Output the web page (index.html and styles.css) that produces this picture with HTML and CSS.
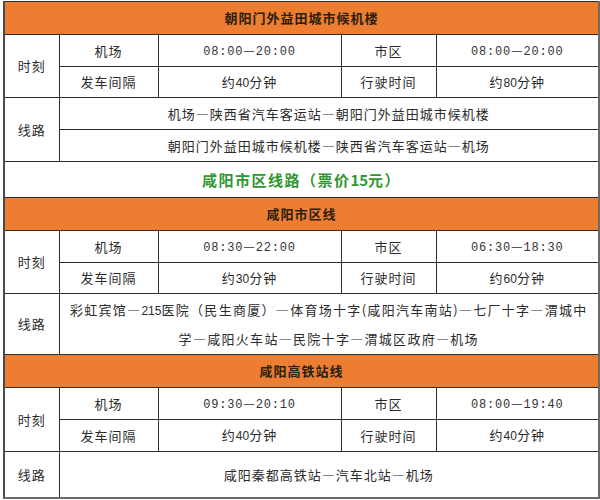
FILE: index.html
```html
<!DOCTYPE html>
<html lang="zh">
<head>
<meta charset="utf-8">
<title>机场巴士时刻表</title>
<link rel="stylesheet" href="styles.css">
</head>
<body>
<table class="sched">
  <colgroup>
    <col class="c1"><col class="c2"><col class="c3"><col class="c4"><col class="c5">
  </colgroup>
  <tbody>
    <tr class="head"><td colspan="5">朝阳门外益田城市候机楼</td></tr>
    <tr class="r32">
      <td rowspan="2">时刻</td>
      <td>机场</td>
      <td class="time">08:00<span class="dash">—</span>20:00</td>
      <td>市区</td>
      <td class="time">08:00<span class="dash">—</span>20:00</td>
    </tr>
    <tr class="r31">
      <td>发车间隔</td>
      <td>约<span class="num">40</span>分钟</td>
      <td>行驶时间</td>
      <td>约<span class="num">80</span>分钟</td>
    </tr>
    <tr class="r32">
      <td rowspan="2">线路</td>
      <td colspan="4">机场—陕西省汽车客运站—朝阳门外益田城市候机楼</td>
    </tr>
    <tr class="r32">
      <td colspan="4">朝阳门外益田城市候机楼—陕西省汽车客运站—机场</td>
    </tr>
    <tr class="title"><td colspan="5">咸阳市区线路（票价<span class="tnum">15</span>元）</td></tr>

    <tr class="head"><td colspan="5">咸阳市区线</td></tr>
    <tr class="r32">
      <td rowspan="2">时刻</td>
      <td>机场</td>
      <td class="time">08:30<span class="dash">—</span>22:00</td>
      <td>市区</td>
      <td class="time">06:30<span class="dash">—</span>18:30</td>
    </tr>
    <tr class="r31">
      <td>发车间隔</td>
      <td>约<span class="num">30</span>分钟</td>
      <td>行驶时间</td>
      <td>约<span class="num">60</span>分钟</td>
    </tr>
    <tr class="r61">
      <td>线路</td>
      <td colspan="4" class="long">彩虹宾馆—<span class="num">215</span>医院（民生商厦）—体育场十字(咸阳汽车南站)—七厂十字—渭城中<br>学—咸阳火车站—民院十字—渭城区政府—机场</td>
    </tr>

    <tr class="head"><td colspan="5">咸阳高铁站线</td></tr>
    <tr class="r32">
      <td rowspan="2">时刻</td>
      <td>机场</td>
      <td class="time">09:30<span class="dash">—</span>20:10</td>
      <td>市区</td>
      <td class="time">08:00<span class="dash">—</span>19:40</td>
    </tr>
    <tr class="r32">
      <td>发车间隔</td>
      <td>约<span class="num">40</span>分钟</td>
      <td>行驶时间</td>
      <td>约<span class="num">40</span>分钟</td>
    </tr>
    <tr class="r46">
      <td>线路</td>
      <td colspan="4">咸阳秦都高铁站—汽车北站—机场</td>
    </tr>
  </tbody>
</table>
</body>
</html>
```

FILE: styles.css
```css
html, body {
  margin: 0;
  padding: 0;
  background: #ffffff;
}

body {
  font-family: "Noto Sans CJK SC", "Noto Sans", sans-serif;
  font-size: 13px;
  color: #2b2b2b;
}

.sched {
  margin: 1px 0 0 3px;
  width: 595px;
  border-collapse: collapse;
  table-layout: fixed;
  border-left: 2px solid #4a4a4a;
  border-right: 2px solid #6a6a6a;
  border-bottom: 2px solid #6a6a6a;
}

.c1 { width: 55px; }
.c2 { width: 99px; }
.c3 { width: 183px; }
.c4 { width: 95px; }
.c5 { width: 163px; }

.sched td {
  border: 1px solid #2e2e2e;
  padding: 0;
  text-align: center;
  vertical-align: middle;
  letter-spacing: 1px;
  line-height: 16px;
}

.sched .head td {
  background: #ed7d31;
  font-weight: bold;
  color: #2a2010;
  height: 32px;
}

.sched .title td {
  font-size: 15px;
  font-weight: bold;
  color: #2f972f;
  height: 35px;
  letter-spacing: 1.5px;
}

.tnum {
  letter-spacing: 0;
}

.r32 td { height: 31px; }
.r31 td { height: 30px; }
.r61 td { height: 60px; }
.r46 td { height: 45px; }

.sched td.time {
  font-family: "Liberation Mono", monospace;
  font-size: 12px;
  letter-spacing: 0.8px;
  color: #333333;
}

.dash {
  font-family: "Noto Sans CJK SC", sans-serif;
  font-size: 13px;
  letter-spacing: 0.8px;
}

.num {
  letter-spacing: 0;
  font-family: "Liberation Sans", sans-serif;
  font-size: 12px;
}

.sched td.long {
  line-height: 27px;
  letter-spacing: 1.3px;
}
```
